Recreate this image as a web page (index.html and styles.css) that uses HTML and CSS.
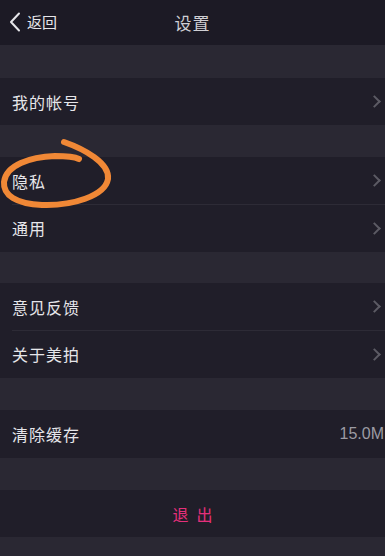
FILE: index.html
```html
<!DOCTYPE html>
<html lang="zh">
<head>
<meta charset="utf-8">
<link rel="stylesheet" href="styles.css">
</head>
<body>
<div class="page">
  <header class="nav">
    <div class="back">
      <svg class="back-icon" width="12" height="20" viewBox="0 0 12 20"><path d="M10 1.5 L2 10 L10 18.5" fill="none" stroke="#e6e6ea" stroke-width="2" stroke-linecap="round" stroke-linejoin="round"/></svg>
      <span>返回</span>
    </div>
    <div class="title">设置</div>
  </header>
  <div class="gap gap-top"></div>
  <div class="group">
    <div class="row"><span class="label">我的帐号</span><span class="chev"></span></div>
  </div>
  <div class="gap"></div>
  <div class="group">
    <div class="row"><span class="label">隐私</span><span class="chev"></span></div>
    <div class="row divided"><span class="label">通用</span><span class="chev"></span></div>
  </div>
  <div class="gap gap-short"></div>
  <div class="group">
    <div class="row"><span class="label">意见反馈</span><span class="chev"></span></div>
    <div class="row divided"><span class="label">关于美拍</span><span class="chev"></span></div>
  </div>
  <div class="gap"></div>
  <div class="group">
    <div class="row tall"><span class="label">清除缓存</span><span class="value">15.0M</span></div>
  </div>
  <div class="gap"></div>
  <div class="group">
    <div class="row center"><span class="logout">退出</span></div>
  </div>
  <svg class="mark" width="120" height="80" viewBox="0 0 120 80">
    <path d="M64 12 C84 19 110 33 108 49 C105 66 72 76 42 75 C16 74 3 65 4 52 C6 35 30 27 55 26 C67 26 75 27 79 29" fill="none" stroke="#f08836" stroke-width="6" stroke-linecap="round" stroke-linejoin="round"/>
  </svg>
</div>
</body>
</html>
```

FILE: styles.css
```css
* { box-sizing: border-box; }
html, body { margin: 0; padding: 0; }
body {
  background: #2a2833;
  font-family: "Noto Sans CJK SC", "Noto Sans", sans-serif;
  color: #e8e8ec;
}
.page {
  position: relative;
  width: 385px;
  height: 556px;
  overflow: hidden;
  background: #2a2833;
}
.nav {
  height: 45px;
  background: #1c1a25;
  display: flex;
  align-items: center;
  justify-content: center;
  position: relative;
}
.back {
  position: absolute;
  left: 9px;
  top: 11px;
  display: flex;
  align-items: center;
  gap: 6px;
  font-size: 15px;
  color: #e6e6ea;
}
.title {
  font-size: 17px;
  color: #cfcfd4;
  letter-spacing: 1px;
}
.gap { height: 32px; }
.gap-top { height: 33px; }
.gap-short { height: 31px; }
.group {
  background: #201e29;
}
.row {
  height: 47px;
  display: flex;
  align-items: center;
  justify-content: space-between;
  padding-left: 12px;
  padding-right: 3px;
  position: relative;
}
.row.divided { height: 48px; }
.row.tall { height: 48px; }
.row.divided::before {
  content: "";
  position: absolute;
  left: 12px;
  right: 0;
  top: 0;
  height: 1px;
  background: #2d2b36;
}
.label {
  font-size: 16px;
  letter-spacing: 1px;
  color: #e6e6ea;
}
.chev {
  width: 9px;
  height: 9px;
  border-top: 2px solid #5c5b64;
  border-right: 2px solid #5c5b64;
  transform: rotate(45deg);
  margin-right: 3px;
}
.value {
  font-family: "Liberation Sans", sans-serif;
  font-size: 16px;
  color: #9c9ba3;
  margin-right: -2px;
}
.row.center { justify-content: center; padding: 0; }
.logout {
  color: #e5307b;
  font-size: 16px;
  letter-spacing: 8px;
  margin-right: -8px;
}
.mark {
  position: absolute;
  left: 0;
  top: 130px;
}
```
